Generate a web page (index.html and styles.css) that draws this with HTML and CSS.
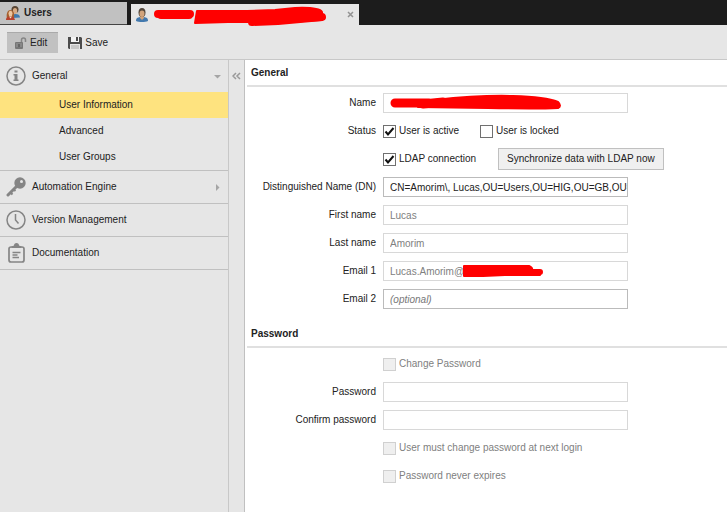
FILE: index.html
```html
<!DOCTYPE html>
<html lang="en">
<head>
    <meta charset="UTF-8">
    <meta name="viewport" content="width=device-width, initial-scale=1.0">
    <title>Users</title>
    <link rel="stylesheet" href="styles.css">
</head>
<body>
    <header class="tabs">
        <a class="tab" href="#users">
            <svg class="tab-icon" width="14" height="14" viewBox="0 0 14 14">
                <path d="M6 12c0-3 1-4 3.500-4s4.500 1 4.500 3.500z" fill="#3f78ad"/>
                <circle cx="9" cy="3.500" r="3.500" fill="#574433"/>
                <ellipse cx="9" cy="5" rx="2.200" ry="3" fill="#d7aa83"/>
                <path d="M1 12c-1-3 0-8 3.500-8s4 4 3.500 8z" fill="#a5602f"/>
                <ellipse cx="4.500" cy="7.500" rx="2" ry="2.700" fill="#edc6a0"/>
                <path d="M0 14c0-3 2-3.500 4.500-3.500s4 1 4.500 3.500z" fill="#b7412d"/>
                <path d="M3 10.500h3l-1.500 2z" fill="#f5dfca"/>
            </svg>
            Users
        </a>
        <div class="tab active">
            <svg class="tab-icon" width="14" height="14" viewBox="0 0 14 14">
                <path d="M1 13c0-3 1.500-3.500 4-4h4c2.500.500 4 1 4 4-3 1.300-9 1.300-12 0z" fill="#4379ae"/>
                <path d="M5 8h4v2L7 12l-2-2z" fill="#cfa27a"/>
                <ellipse cx="7" cy="4.500" rx="3.500" ry="4.500" fill="#51463b"/>
                <ellipse cx="7" cy="5.800" rx="2.500" ry="3.200" fill="#d2a47c"/>
            </svg>
            <svg class="mark mark-tab" width="174" height="20" viewBox="0 0 174 20">
                <path d="M5 6h32M8 7h28M99 14l26-1 44-4" stroke-width="8"/>
                <path d="M44 3h50l28-1 20-2q24-1 27 4v8l-35 2H75l-33 1z" class="mark-fill"/>
            </svg>
            <button class="close" aria-label="Close tab">
                <svg width="7" height="7" viewBox="0 0 7 7"><path d="M1 1l5 5M6 1L1 6" stroke="#929292" stroke-width="1.500"/></svg>
            </button>
        </div>
    </header>

    <div class="toolbar">
        <button class="tool pressed">
            <svg width="13" height="14" viewBox="0 0 13 14">
                <path d="M7.500 7V4a2 2 0 0 1 4 0v2" fill="none" stroke="#858585" stroke-width="1.500"/>
                <rect x="1" y="6" width="8" height="7" rx="1" fill="#777"/>
                <path d="M2 8h6M2 10h6" stroke="#999"/>
                <path d="M5 8v3" stroke="#666" stroke-width="2"/>
            </svg>
            Edit
        </button>
        <button class="tool">
            <svg width="14" height="14" viewBox="0 0 14 14">
                <path d="M0 1h13l1 1v11H1l-1-1z" fill="#4c4c4c"/>
                <path d="M3 1h8v5H3z" fill="#f5f5f5"/>
                <path d="M8 1h2v4H8z" fill="#4c4c4c"/>
                <path d="M2 8h10v5H2z" fill="#e6e6e6"/>
                <path d="M3 10h8M3 12h8" stroke="#aaa"/>
            </svg>
            Save
        </button>
    </div>

    <div class="page">
        <nav class="sidebar">
            <div class="group">
                <a class="item" href="#general">
                    <svg width="20" height="20" viewBox="0 0 20 20">
                        <circle cx="10" cy="10" r="9" fill="none" stroke="#858585" stroke-width="1.500"/>
                        <path d="M8.500 4.500h3v2h-3zM7.500 8h4v5.500h1V15h-5v-1.500h1V9.500h-1z" fill="#858585"/>
                    </svg>
                    <span>General</span>
                    <svg class="arrow" width="7" height="7" viewBox="0 0 7 7"><path d="M0 2h7L3.500 5.500z" fill="#a5a5a5"/></svg>
                </a>
                <a class="subitem selected" href="#user-information">User Information</a>
                <a class="subitem" href="#advanced">Advanced</a>
                <a class="subitem" href="#user-groups">User Groups</a>
            </div>
            <div class="group">
                <a class="item" href="#automation-engine">
                    <svg width="20" height="20" viewBox="0 0 20 20">
                        <path d="M10.500 9.500L2 18" stroke="#858585" stroke-width="3" stroke-linecap="round"/>
                        <path d="M4 15l2.500 2.500M7 12l2.500 2" stroke="#858585" stroke-width="2"/>
                        <circle cx="14" cy="6" r="5.700" fill="#858585"/>
                        <circle cx="15.500" cy="4.500" r="1.500" fill="#e6e6e6"/>
                    </svg>
                    <span>Automation Engine</span>
                    <svg class="arrow" width="7" height="7" viewBox="0 0 7 7"><path d="M2 0v7l3.500-3.500z" fill="#a5a5a5"/></svg>
                </a>
            </div>
            <div class="group">
                <a class="item" href="#version-management">
                    <svg width="20" height="20" viewBox="0 0 20 20">
                        <circle cx="10" cy="10" r="9" fill="none" stroke="#858585" stroke-width="1.500"/>
                        <path d="M9.500 4v6l3 3.500" fill="none" stroke="#858585" stroke-width="1.500"/>
                    </svg>
                    <span>Version Management</span>
                </a>
            </div>
            <div class="group">
                <a class="item" href="#documentation">
                    <svg width="20" height="20" viewBox="0 0 20 20">
                        <rect x="3" y="4" width="15" height="15" rx="2" fill="none" stroke="#858585" stroke-width="1.700"/>
                        <path d="M5.500 5V3.500L8 2.500a2.500 2.500 0 0 1 5 0l2.500 1V5z" fill="#858585"/>
                        <path d="M6.500 9.500h8M6.500 12h5M6.500 14.500h6.500" stroke="#858585" stroke-width="1.300"/>
                    </svg>
                    <span>Documentation</span>
                </a>
            </div>
        </nav>
        <button class="collapse" aria-label="Collapse sidebar">
            <svg width="9" height="8" viewBox="0 0 9 8"><path d="M4 1L1 4l3 3M8 1L5 4l3 3" fill="none" stroke="#999" stroke-width="1.500"/></svg>
        </button>

        <main class="content">
            <form>
                <h2 class="heading">General</h2>
                <div class="fields">
                    <label class="label" for="name">Name</label>
                    <div class="field">
                        <input class="text readonly" id="name" type="text" readonly>
                        <svg class="mark mark-name" width="172" height="16" viewBox="0 0 172 16">
                            <path d="M5 8h34M33 9l20-2" stroke-width="9"/>
                            <path d="M45 5q45-5 78-4 33 1 45 6 4 4 0 6-22 1-70 0l-70-1z" class="mark-fill"/>
                        </svg>
                    </div>

                    <span class="label">Status</span>
                    <div class="row">
                        <label class="check first"><input class="box" type="checkbox" checked>User is active</label>
                        <label class="check"><input class="box" type="checkbox">User is locked</label>
                    </div>

                    <div class="row no-label">
                        <label class="check ldap"><input class="box" type="checkbox" checked>LDAP connection</label>
                        <button class="sync" type="button">Synchronize data with LDAP now</button>
                    </div>

                    <label class="label" for="dn">Distinguished Name (DN)</label>
                    <div class="field"><input class="text" id="dn" type="text" value="CN=Amorim\, Lucas,OU=Users,OU=HIG,OU=GB,OU="></div>

                    <label class="label" for="first">First name</label>
                    <div class="field"><input class="text readonly" id="first" type="text" value="Lucas" readonly></div>

                    <label class="label" for="last">Last name</label>
                    <div class="field"><input class="text readonly" id="last" type="text" value="Amorim" readonly></div>

                    <label class="label" for="email1">Email 1</label>
                    <div class="field">
                        <input class="text readonly" id="email1" type="text" value="Lucas.Amorim@" readonly>
                        <svg class="mark mark-email" width="82" height="13" viewBox="0 0 82 13">
                            <path d="M4 4h62M66 7h12" stroke-width="6"/>
                            <path d="M2 1h65q4 2 3 4l8 2v3H43l-22 1H2z" class="mark-fill"/>
                        </svg>
                    </div>

                    <label class="label" for="email2">Email 2</label>
                    <div class="field"><input class="text" id="email2" type="text" placeholder="(optional)"></div>
                </div>

                <h2 class="heading">Password</h2>
                <div class="fields">
                    <label class="check no-label off"><input class="box" type="checkbox" disabled>Change Password</label>

                    <label class="label" for="password">Password</label>
                    <div class="field"><input class="text readonly" id="password" type="password" disabled></div>

                    <label class="label" for="confirm">Confirm password</label>
                    <div class="field"><input class="text readonly" id="confirm" type="password" disabled></div>

                    <label class="check no-label off"><input class="box" type="checkbox" disabled>User must change password at next login</label>
                    <label class="check no-label off"><input class="box" type="checkbox" disabled>Password never expires</label>
                </div>
            </form>
        </main>
    </div>
</body>
</html>
```

FILE: styles.css
```css
* {
    box-sizing: border-box;
}
body {
    margin: 0;
    min-height: 100vh;
    display: flex;
    flex-direction: column;
    font-family: "Liberation Sans", Arial, sans-serif;
    font-size: 10px;
    line-height: 12px;
    color: #222;
    background-color: #e6e6e6;
}
button, input {
    font: inherit;
    color: inherit;
    margin: 0;
}
button {
    border: 0;
    padding: 0;
    background: none;
    cursor: pointer;
}
a {
    color: inherit;
    text-decoration: none;
}
svg {
    display: block;
    flex: none;
}

/* tabs */
.tabs {
    display: flex;
    align-items: flex-end;
    gap: 4px;
    height: 25px;
    background-color: #1c1c1c;
}
.tab {
    display: flex;
    align-items: center;
    gap: 4px;
    width: 127px;
    height: 23px;
    padding: 0 6px;
    font-weight: bold;
    background-color: #c1c1c1;
    border-bottom: 1px solid #444;
}
.tab.active {
    position: relative;
    width: 228px;
    height: 21px;
    padding: 0 4px;
    background-color: #e6e6e6;
    border: 0;
}
.close {
    margin-left: auto;
    padding: 1px;
}

/* red marker strokes */
.mark {
    position: absolute;
    overflow: visible;
    fill: none;
    stroke: #f00;
    stroke-linecap: round;
    stroke-linejoin: round;
}
.mark-fill {
    fill: #f00;
    stroke-width: 2px;
}
.mark-tab {
    left: 22px;
    top: 4px;
}
.mark-name {
    left: 7px;
    top: 2px;
}
.mark-email {
    left: 79px;
    top: 4px;
}

.toolbar {
    display: flex;
    gap: 10px;
    height: 35px;
    padding: 7px;
    border-bottom: 1px solid #c8c8c8;
}
.tool {
    display: flex;
    align-items: center;
    gap: 3px;
    height: 21px;
}
.tool.pressed {
    padding: 0 11px 0 7px;
    background-color: #c1c1c1;
    border-top: 1px solid #aaa;
}

.page {
    display: flex;
    flex: 1;
}

/* sidebar */
.sidebar {
    width: 229px;
    flex: none;
    border-right: 1px solid #c8c8c8;
}
.group {
    border-bottom: 1px solid #c0c0c0;
}
.item {
    display: flex;
    align-items: center;
    gap: 6px;
    height: 32px;
    padding: 0 7px 0 6px;
}
.arrow {
    margin-left: auto;
}
.subitem {
    display: block;
    padding: 7px 0 7px 59px;
}
.subitem.selected {
    background-color: #fee37f;
}
.collapse {
    display: flex;
    justify-content: center;
    width: 16px;
    flex: none;
    padding-top: 12px;
    border-right: 1px solid #c0c0c0;
}

/* form */
.content {
    flex: 1;
    min-width: 0;
    padding-left: 2px;
    background-color: #fff;
}
.heading {
    margin: 0;
    padding: 7px 4px 6px;
    font-size: 10px;
    font-weight: bold;
    border-bottom: 2px solid #e0e0e0;
}
.fields {
    display: grid;
    grid-template-columns: 129px 245px;
    grid-auto-rows: 20px;
    align-items: center;
    gap: 8px 7px;
    padding: 6px 0 12px;
}
.label {
    text-align: right;
}
.no-label {
    grid-column: 2;
}
.field {
    position: relative;
}
.text {
    display: block;
    width: 100%;
    height: 20px;
    padding: 0 0 0 6px;
    border: 1px solid #bbb;
    background-color: #fff;
    outline: 0;
}
.text.readonly {
    color: #808080;
    border-color: #d8d8d8;
}
.text::placeholder {
    color: #777;
    font-style: italic;
}
.row {
    display: flex;
    align-items: center;
    white-space: nowrap;
}
.check {
    display: flex;
    align-items: center;
    gap: 3px;
}
.check.first {
    width: 97px;
}
.check.ldap {
    width: 115px;
    flex: none;
}
.check.off {
    color: #808080;
}
.box {
    appearance: none;
    width: 13px;
    height: 13px;
    border: 1px solid #707070;
    background-color: #fff;
}
.box:checked {
    background-image: url("data:image/svg+xml,%3Csvg xmlns='http://www.w3.org/2000/svg' viewBox='0 0 11 11'%3E%3Cpath d='M1.500 5.500L4 8.500 9.500 2' fill='none' stroke='%23111' stroke-width='2'/%3E%3C/svg%3E");
}
.box:disabled {
    border-color: #d0d0d0;
    background-color: #efefef;
}
.sync {
    flex: none;
    height: 22px;
    padding: 0 8px;
    border: 1px solid #c0c0c0;
    background-color: #f0f0f0;
}
```
